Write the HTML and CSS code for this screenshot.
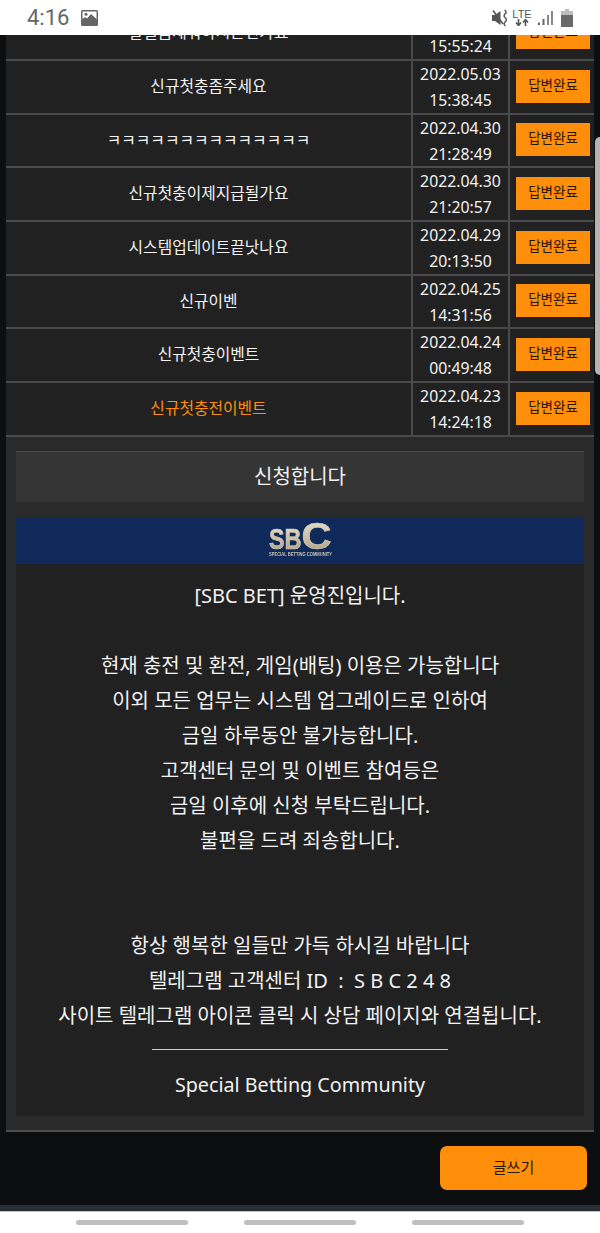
FILE: index.html
```html
<!DOCTYPE html>
<html lang="ko">
<head>
    <meta charset="UTF-8">
    <meta name="viewport" content="width=device-width, initial-scale=1.0">
    <title>고객센터</title>
    <link rel="stylesheet" href="styles.css">
</head>
<body>
    <div class="status-bar">
        <div class="status-left">
            <span class="clock">4:16</span>
            <svg class="pic-icon" width="17" height="16" viewBox="0 0 17 16">
                <rect x="0" y="0" width="17" height="16" rx="1.5" fill="#666"/>
                <rect x="1.5" y="1.5" width="14" height="8" fill="#fff"/>
                <path d="M1.5 9 L4 7 L6 8.5 L10 4 L15.5 9 V14.5 H1.5 Z" fill="#666"/>
                <circle cx="5" cy="4.2" r="1.5" fill="#666"/>
            </svg>
        </div>
        <div class="status-right">
            <svg class="mute-icon" width="16" height="18" viewBox="0 0 16 18">
                <path d="M0 6 H3 L8.5 2 V16 L3 12 H0 Z" fill="#555"/>
                <path d="M1 1.5 L11 15" stroke="#555" stroke-width="1.6" fill="none"/>
                <path d="M12.5 1 Q15.5 3 13 5 Q11 7 13.5 9 Q15.5 11 13 13 Q11 15 13.5 17" fill="none" stroke="#555" stroke-width="1.5"/>
            </svg>
            <div class="net">
                <span class="lte">LTE</span>
                <svg width="14" height="7" viewBox="0 0 14 7">
                    <path d="M3.5 0 V5 M1 3.5 L3.5 6.5 L6 3.5" fill="none" stroke="#555" stroke-width="1.6"/>
                    <path d="M10.5 7 V2 M8 3.5 L10.5 0.5 L13 3.5" fill="none" stroke="#555" stroke-width="1.6"/>
                </svg>
            </div>
            <svg class="signal-icon" width="15" height="14" viewBox="0 0 15 14">
                <rect x="0" y="11.5" width="2" height="2.5" fill="#666"/>
                <rect x="4.5" y="8" width="2" height="6" fill="#666"/>
                <rect x="9" y="4" width="2" height="10" fill="#888"/>
                <rect x="13" y="0" width="2" height="14" fill="#888"/>
            </svg>
            <svg class="battery-icon" width="12" height="18" viewBox="0 0 12 18">
                <path d="M4 0 H8 V2 H12 V18 H0 V2 H4 Z" fill="#bdbdbd"/>
                <rect x="0" y="6" width="12" height="12" fill="#6a6a6a"/>
            </svg>
        </div>
    </div>

    <div class="page">
        <div class="scrollbar"></div>
        <div class="list">
            <div class="row">
                <div class="subject">할걸음새뭐하시는건가요</div>
                <div class="date">2022.05.03<br>15:55:24</div>
                <div class="state"><span class="state-btn">답변완료</span></div>
            </div>
            <div class="row">
                <div class="subject">신규첫충좀주세요</div>
                <div class="date">2022.05.03<br>15:38:45</div>
                <div class="state"><span class="state-btn">답변완료</span></div>
            </div>
            <div class="row">
                <div class="subject">ㅋㅋㅋㅋㅋㅋㅋㅋㅋㅋㅋㅋㅋㅋ</div>
                <div class="date">2022.04.30<br>21:28:49</div>
                <div class="state"><span class="state-btn">답변완료</span></div>
            </div>
            <div class="row">
                <div class="subject">신규첫충이제지급될가요</div>
                <div class="date">2022.04.30<br>21:20:57</div>
                <div class="state"><span class="state-btn">답변완료</span></div>
            </div>
            <div class="row">
                <div class="subject">시스템업데이트끝낫나요</div>
                <div class="date">2022.04.29<br>20:13:50</div>
                <div class="state"><span class="state-btn">답변완료</span></div>
            </div>
            <div class="row">
                <div class="subject">신규이벤</div>
                <div class="date">2022.04.25<br>14:31:56</div>
                <div class="state"><span class="state-btn">답변완료</span></div>
            </div>
            <div class="row">
                <div class="subject">신규첫충이벤트</div>
                <div class="date">2022.04.24<br>00:49:48</div>
                <div class="state"><span class="state-btn">답변완료</span></div>
            </div>
            <div class="row">
                <div class="subject active">신규첫충전이벤트</div>
                <div class="date">2022.04.23<br>14:24:18</div>
                <div class="state"><span class="state-btn">답변완료</span></div>
            </div>
        </div>

        <div class="detail">
            <div class="detail-title">신청합니다</div>
            <div class="detail-body">
                <div class="banner">
                    <svg class="logo" width="66" height="36" viewBox="0 0 66 36">
                        <defs>
                            <linearGradient id="gold" x1="0" y1="0" x2="0" y2="1">
                                <stop offset="0" stop-color="#efe6d2"/>
                                <stop offset="1" stop-color="#a89a80"/>
                            </linearGradient>
                        </defs>
                        <text class="logo-mark" x="2" y="27" font-size="30" fill="url(#gold)" textLength="15.5" lengthAdjust="spacingAndGlyphs">S</text>
                        <text class="logo-mark" x="17.5" y="27" font-size="30" fill="url(#gold)" textLength="17" lengthAdjust="spacingAndGlyphs">B</text>
                        <text class="logo-mark" x="34.5" y="27" font-size="37" fill="url(#gold)" textLength="30" lengthAdjust="spacingAndGlyphs">C</text>
                        <text class="logo-sub" x="2" y="34" textLength="63" lengthAdjust="spacingAndGlyphs">SPECIAL BETTING COMMUNITY</text>
                    </svg>
                </div>
                <div class="message">
                    <p>[SBC BET] 운영진입니다.</p>
                    <p>&nbsp;</p>
                    <p>현재 충전 및 환전, 게임(배팅) 이용은 가능합니다</p>
                    <p>이외 모든 업무는 시스템 업그레이드로 인하여</p>
                    <p>금일 하루동안 불가능합니다.</p>
                    <p>고객센터 문의 및 이벤트 참여등은</p>
                    <p>금일 이후에 신청 부탁드립니다.</p>
                    <p>불편을 드려 죄송합니다.</p>
                    <p>&nbsp;</p>
                    <p>&nbsp;</p>
                    <p>항상 행복한 일들만 가득 하시길 바랍니다</p>
                    <p>텔레그램 고객센터 ID &nbsp;:&nbsp; S B C 2 4 8</p>
                    <p>사이트 텔레그램 아이콘 클릭 시 상담 페이지와 연결됩니다.</p>
                    <div class="rule"></div>
                    <p class="sign">Special Betting Community</p>
                </div>
            </div>
        </div>

        <div class="actions">
            <a class="write-btn">글쓰기</a>
        </div>
    </div>

    <div class="strip"></div>
    <div class="nav-bar">
        <span class="nav-pill"></span>
        <span class="nav-pill"></span>
        <span class="nav-pill"></span>
    </div>
</body>
</html>
```

FILE: styles.css
```css
html, body { margin: 0; padding: 0; }
body { width: 600px; height: 1233px; overflow: hidden; display: flex; flex-direction: column; background: #0d0e10; font-family: "Noto Sans", "Noto Sans CJK KR", sans-serif; color: #f2f2f2; }

.status-bar { height: 35px; flex: none; background: #fff; display: flex; justify-content: space-between; align-items: center; padding: 0 27px; box-sizing: border-box; }
.status-left { display: flex; align-items: center; gap: 12px; }
.clock { font-family: Roboto, sans-serif; font-size: 22px; color: #666; }
.pic-icon { display: block; }
.status-right { display: flex; align-items: center; }
.status-right svg { display: block; }
.mute-icon { margin-right: 6px; }
.net { display: flex; flex-direction: column; align-items: center; width: 16px; margin-right: 8px; }
.lte { font-family: "Liberation Sans", sans-serif; font-size: 11px; line-height: 10px; color: #555; }
.signal-icon { margin-right: 8px; }

.page { flex: 1; min-height: 0; overflow: hidden; position: relative; padding: 0 6px; }
.scrollbar { position: absolute; right: 0; top: 102px; width: 5px; height: 238px; background: #b4b4b4; border-radius: 5px 0 0 5px; }

.list { margin-top: -27.7px; background: #212121; }
.row { display: grid; grid-template-columns: 405px 99px 84px; height: 53.7px; box-sizing: border-box; border-bottom: 2px solid #49494b; text-align: center; }
.subject { display: flex; align-items: center; justify-content: center; padding-bottom: 3px; font-size: 15.8px; }
.subject.active { color: #ff8f0a; }
.date { font-size: 15.8px; line-height: 26px; border-left: 2px solid #49494b; border-right: 2px solid #49494b; }
.state { display: flex; align-items: center; justify-content: center; padding: 0 0 2px 2px; }
.state-btn { width: 74px; height: 33px; line-height: 30px; background: #ff8f0a; color: #2a1500; font-size: 13.5px; }

.detail { background: #2a2a2a; padding: 14px 10px; border-bottom: 2px solid #4d4d4d; }
.detail-title { height: 51px; line-height: 50px; background: #353535; border-top: 1px solid #4a4a4a; text-align: center; font-size: 20px; box-sizing: border-box; }
.detail-body { margin-top: 15px; background: #212121; }
.banner { height: 47px; background: #0f2a5a; display: flex; justify-content: center; align-items: center; }
.logo { display: block; filter: blur(0.4px); }
.logo-mark { font-family: "Liberation Sans", sans-serif; font-weight: bold; stroke: #d2c7b0; stroke-width: 0.7px; }
.logo-sub { font-family: "Liberation Sans", sans-serif; font-size: 5px; font-weight: bold; fill: #c8c0b0; }

.message { padding: 14.5px 0 13.5px; text-align: center; font-size: 20px; line-height: 35px; }
.message p { margin: 0; }
.message .sign { font-size: 19.7px; }
.rule { width: 296px; height: 1px; margin: 16px auto 17px; background: #d0d0d0; }

.actions { display: flex; justify-content: flex-end; padding: 14px 13px 0 0; margin-right: -6px; }
.write-btn { width: 147px; height: 44px; line-height: 42px; background: #ff8f0a; border-radius: 7px; color: #2a1500; font-size: 15px; text-align: center; }

.strip { height: 6px; flex: none; background: #2b2d35; }
.nav-bar { height: 22px; flex: none; background: #fff; border-top: 1px solid #c4c4c4; display: flex; justify-content: center; gap: 56px; padding-top: 8px; box-sizing: border-box; }
.nav-pill { width: 112px; height: 5px; border-radius: 3px; background: #c0c0c0; }
```
